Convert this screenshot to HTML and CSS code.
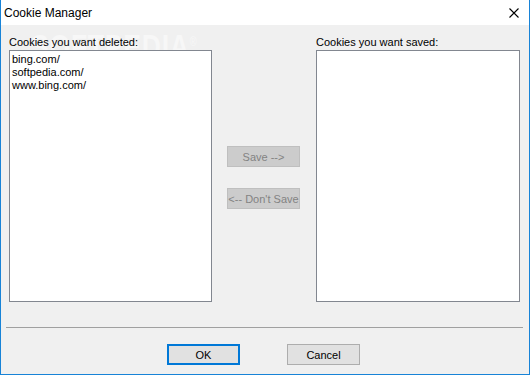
FILE: index.html
```html
<!DOCTYPE html>
<html lang="en">
<head>
    <meta charset="UTF-8">
    <title>Cookie Manager</title>
    <link rel="stylesheet" href="styles.css">
</head>
<body>

    <div class="window">

        <!-- Title bar -->
        <div class="titlebar">
            <span class="title">Cookie Manager</span>
            <svg class="close" width="10" height="10" viewBox="0 0 10 10">
                <path d="M0.5 0.5 L9.5 9.5 M9.5 0.5 L0.5 9.5" stroke="#000" stroke-width="1.1" fill="none"/>
            </svg>
        </div>

        <div class="content">
            <div class="watermark">SOFTPEDIA<sup>®</sup></div>

            <div class="panes">
                <div class="pane">
                    <div class="label">Cookies you want deleted:</div>
                    <div class="listbox">
                        <div class="item">bing.com/</div>
                        <div class="item">softpedia.com/</div>
                        <div class="item">www.bing.com/</div>
                    </div>
                </div>

                <div class="middle">
                    <button class="btn disabled">Save --&gt;</button>
                    <button class="btn disabled">&lt;-- Don't Save</button>
                </div>

                <div class="pane right">
                    <div class="label">Cookies you want saved:</div>
                    <div class="listbox"></div>
                </div>
            </div>

            <div class="separator"></div>

            <div class="actions">
                <button class="btn default">OK</button>
                <button class="btn">Cancel</button>
            </div>
        </div>

    </div>

</body>
</html>
```

FILE: styles.css
```css
body { margin: 0; font-family: "Liberation Sans", Arial, sans-serif; font-size: 11px; color: #000; background: #fff; }
.window { width: 530px; height: 375px; box-sizing: border-box; border: 1px solid #1883d7; border-top: none; background: #f0f0f0; display: flex; flex-direction: column; }
.titlebar { height: 25px; background: #fff; display: flex; align-items: center; justify-content: space-between; padding: 0 10px 0 3px; }
.title { font-size: 12px; }
.close { display: block; margin-top: 1px; }
.content { position: relative; flex: 1; padding-top: 11px; }
.watermark { position: absolute; left: 30px; top: 2px; font-size: 34px; font-weight: bold; color: #f7f7f7; transform: scaleX(0.78); transform-origin: left top; letter-spacing: 1px; }
.watermark sup { font-size: 12px; font-weight: normal; }
.panes { display: flex; padding-left: 8px; }
.pane { width: 203px; position: relative; }
.pane.right { width: 204px; }
.label { line-height: 13px; height: 13px; margin-bottom: 1px; }
.listbox { height: 252px; box-sizing: border-box; background: #fff; border: 1px solid #828790; padding: 2px 2px; }
.item { line-height: 13px; }
.middle { width: 73px; margin: 0 16px 0 15px; padding-top: 110px; display: flex; flex-direction: column; gap: 21px; }
.btn { width: 73px; height: 21px; box-sizing: border-box; padding: 0; font-family: "Liberation Sans", Arial, sans-serif; font-size: 11px; color: #000; background: #e1e1e1; border: 1px solid #adadad; }
.btn.disabled { background: #cccccc; border-color: #bfbfbf; color: #838383; }
.btn.default { border: 2px solid #0078d7; }
.separator { height: 1px; background: #a0a0a0; margin: 25px 6px 0 5px; }
.actions { display: flex; gap: 47px; padding: 16px 0 0 166px; }
```
